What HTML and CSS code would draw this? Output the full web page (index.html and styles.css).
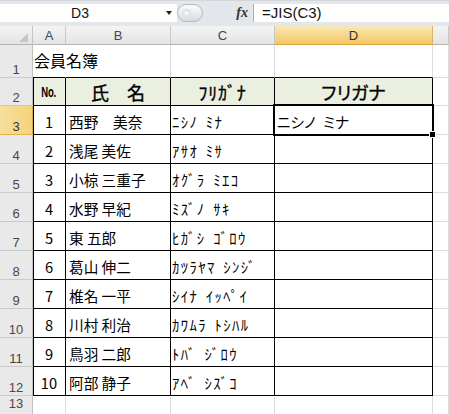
FILE: index.html
```html
<!DOCTYPE html>
<html lang="ja">
<head>
<meta charset="utf-8">
<title>会員名簿</title>
<link rel="stylesheet" href="styles.css">
</head>
<body>
<div class="topbar">
  <div class="namebox"><span class="nb-text">D3</span><span class="nb-arrow"><span class="tri"></span></span></div>
  <div class="grip"><span class="pill"><span class="pill-dot"></span></span></div>
  <div class="fx">fx</div>
  <div class="formula">=JIS(C3)</div>
</div>
<div class="sheet">
  <div class="corner"></div>
  <div class="hdr">A</div>
  <div class="hdr">B</div>
  <div class="hdr">C</div>
  <div class="hdr sel">D</div>
  <div class="hdr"></div>

  <div class="rh">1</div>
  <div class="c tt title">会員名簿</div>
  <div class="c tt"></div>
  <div class="c tt"></div>
  <div class="c tt"></div>
  <div class="c"></div>

  <div class="rh">2</div>
  <div class="c t tl th"><span class="no">No.</span></div>
  <div class="c t th">氏　名</div>
  <div class="c t th hw">ﾌﾘｶﾞﾅ</div>
  <div class="c t th">フリガナ</div>
  <div class="c"></div>

  <div class="rh rsel">3</div>
  <div class="c t tl num">1</div>
  <div class="c t name">西野　美奈</div>
  <div class="c t kana">ﾆｼﾉ ﾐﾅ</div>
  <div class="c t active">ニシノ&ensp;ミナ<span class="selbox"></span><span class="handle"></span></div>
  <div class="c"></div>

  <div class="rh">4</div>
  <div class="c t tl num">2</div>
  <div class="c t name">浅尾 美佐</div>
  <div class="c t kana">ｱｻｵ ﾐｻ</div>
  <div class="c t"></div>
  <div class="c"></div>

  <div class="rh">5</div>
  <div class="c t tl num">3</div>
  <div class="c t name">小椋 三重子</div>
  <div class="c t kana">ｵｸﾞﾗ ﾐｴｺ</div>
  <div class="c t"></div>
  <div class="c"></div>

  <div class="rh">6</div>
  <div class="c t tl num">4</div>
  <div class="c t name">水野 早紀</div>
  <div class="c t kana">ﾐｽﾞﾉ ｻｷ</div>
  <div class="c t"></div>
  <div class="c"></div>

  <div class="rh">7</div>
  <div class="c t tl num">5</div>
  <div class="c t name">東 五郎</div>
  <div class="c t kana">ﾋｶﾞｼ ｺﾞﾛｳ</div>
  <div class="c t"></div>
  <div class="c"></div>

  <div class="rh">8</div>
  <div class="c t tl num">6</div>
  <div class="c t name">葛山 伸二</div>
  <div class="c t kana">ｶﾂﾗﾔﾏ ｼﾝｼﾞ</div>
  <div class="c t"></div>
  <div class="c"></div>

  <div class="rh">9</div>
  <div class="c t tl num">7</div>
  <div class="c t name">椎名 一平</div>
  <div class="c t kana">ｼｲﾅ ｲｯﾍﾟｲ</div>
  <div class="c t"></div>
  <div class="c"></div>

  <div class="rh">10</div>
  <div class="c t tl num">8</div>
  <div class="c t name">川村 利治</div>
  <div class="c t kana">ｶﾜﾑﾗ ﾄｼﾊﾙ</div>
  <div class="c t"></div>
  <div class="c"></div>

  <div class="rh">11</div>
  <div class="c t tl num">9</div>
  <div class="c t name">鳥羽 二郎</div>
  <div class="c t kana">ﾄﾊﾞ ｼﾞﾛｳ</div>
  <div class="c t"></div>
  <div class="c"></div>

  <div class="rh">12</div>
  <div class="c t tl num">10</div>
  <div class="c t name">阿部 静子</div>
  <div class="c t kana">ｱﾍﾞ ｼｽﾞｺ</div>
  <div class="c t"></div>
  <div class="c"></div>

  <div class="rh last">13</div>
  <div class="c"></div>
  <div class="c"></div>
  <div class="c"></div>
  <div class="c"></div>
  <div class="c"></div>
</div>
</body>
</html>
```

FILE: styles.css
```css
html, body {
  margin: 0;
  padding: 0;
}
body {
  width: 449px;
  height: 414px;
  overflow: hidden;
  background: #fff;
  font-family: "Noto Sans CJK JP", sans-serif;
  font-feature-settings: "palt";
  color: #000;
}

/* ---------- formula bar ---------- */
.topbar {
  display: flex;
  align-items: flex-start;
  height: 26px;
  box-sizing: border-box;
  padding-top: 3px;
  background: #e3e6ea;
  border-top: 1px solid #d3d7dc;
}
.namebox {
  display: flex;
  align-items: center;
  width: 177px;
  height: 18px;
  background: #fff;
}
.nb-text {
  flex: 1;
  text-align: center;
  font: 14px "Liberation Sans", sans-serif;
  line-height: 18px;
  color: #111;
}
.nb-arrow {
  width: 17px;
  display: flex;
  justify-content: center;
  align-items: center;
}
.tri {
  width: 0;
  height: 0;
  border-left: 3.5px solid transparent;
  border-right: 3.5px solid transparent;
  border-top: 4px solid #222;
}
.grip {
  width: 30px;
  height: 18px;
  display: flex;
  align-items: center;
}
.pill {
  display: flex;
  align-items: center;
  width: 26px;
  height: 18px;
  box-sizing: border-box;
  border: 1px solid #b3b8be;
  border-radius: 9px;
  background: linear-gradient(#fbfbfb, #d9dce0);
}
.pill-dot {
  width: 9px;
  height: 8px;
  margin-left: 4px;
  border-radius: 50%;
  background: radial-gradient(#ffffff, #c8ccd1);
}
.fx {
  width: 46px;
  height: 18px;
  box-sizing: border-box;
  padding-right: 5px;
  text-align: right;
  font: italic bold 14px "Liberation Serif", serif;
  line-height: 18px;
  color: #333;
}
.formula {
  flex: 1;
  height: 18px;
  background: #fff;
  border-left: 1px solid #a8aeb6;
  padding-left: 8px;
  font: 15px "Liberation Sans", sans-serif;
  line-height: 18px;
  color: #111;
}

/* ---------- sheet grid ---------- */
.sheet {
  display: grid;
  grid-template-columns: 33px 33px 105px 104px 158px 1fr;
  grid-template-rows: 19px 33px 28px repeat(10, 29px) 30px;
  background: #fff;
}
.sheet > div {
  box-sizing: border-box;
  min-width: 0;
}
.corner {
  display: flex;
  justify-content: flex-end;
  align-items: flex-end;
  background: linear-gradient(#f3f3f3, #e4e4e4);
  border-right: 1px solid #c4c4c4;
  border-bottom: 1px solid #b4b4b4;
}
.corner::after {
  content: "";
  width: 0;
  height: 0;
  border-left: 9px solid transparent;
  border-bottom: 9px solid #c6c6c6;
  margin: 0 4px 2px 0;
}
.hdr {
  background: linear-gradient(#f4f4f4, #e4e4e4);
  border-right: 1px solid #c8c8c8;
  border-bottom: 1px solid #b4b4b4;
  text-align: center;
  padding-top: 3px;
  font: 13px "Liberation Sans", sans-serif;
  line-height: 14px;
  color: #474747;
}
.hdr.sel {
  background: linear-gradient(#f9e8b3, #f3c865);
  border-bottom-color: #e0a33c;
  border-right-color: #d9b468;
  color: #333;
}
.rh {
  display: flex;
  justify-content: center;
  align-items: flex-end;
  background: #e9e9e9;
  border-right: 1px solid #c0c0c0;
  border-bottom: 1px solid #c9c9c9;
  font: 13px "Liberation Sans", sans-serif;
  line-height: 14px;
  color: #474747;
}
.rh.last {
  align-items: flex-start;
  padding-top: 1px;
}
.rh.rsel {
  background: linear-gradient(to right, #f8df9c, #f6d27c);
  border-bottom-color: #e2b451;
  border-right-color: #d9a94a;
  color: #333;
}

.c {
  display: flex;
  align-items: flex-end;
  border-right: 1px solid #dadcde;
  border-bottom: 1px solid #dadcde;
  font-size: 14.67px;
  line-height: 20px;
  padding-bottom: 2px;
  white-space: pre;
  overflow: hidden;
}
.c.tt {
  border-bottom-color: #000;
}
.c.t {
  border-right-color: #000;
  border-bottom-color: #000;
}
.c.tl {
  box-shadow: inset 1px 0 0 #000;
}
.title {
  overflow: visible;
  position: relative;
  z-index: 1;
  border-right-color: transparent;
  font-size: 16px;
  padding-left: 1px;
  padding-bottom: 7px;
}
.th {
  align-items: center;
  justify-content: center;
  padding-bottom: 0;
  background: #ebefdf;
  font-size: 18px;
  font-weight: normal;
  -webkit-text-stroke: 0.35px #000;
}
.th.hw {
  font-feature-settings: normal;
  letter-spacing: 0.8px;
}
.no {
  display: inline-block;
  font: bold 14px "Liberation Sans", sans-serif;
  transform: scaleX(0.68);
  letter-spacing: -0.5px;
  -webkit-text-stroke: 0;
}
.num {
  justify-content: center;
}
.name {
  padding-left: 3px;
}
.kana {
  padding-left: 1px;
  font-feature-settings: normal;
  letter-spacing: 1.4px;
  word-spacing: 3px;
}
.active {
  position: relative;
  overflow: visible;
  padding-left: 2px;
}
.selbox {
  position: absolute;
  left: -2px;
  top: -2px;
  right: -2px;
  bottom: -2px;
  border: 2px solid #000;
  box-shadow: inset 0 0 0 1px #fff;
  z-index: 2;
}
.handle {
  position: absolute;
  right: -4px;
  bottom: -4px;
  width: 5px;
  height: 5px;
  background: #000;
  border: 1px solid #fff;
  z-index: 3;
}
```
